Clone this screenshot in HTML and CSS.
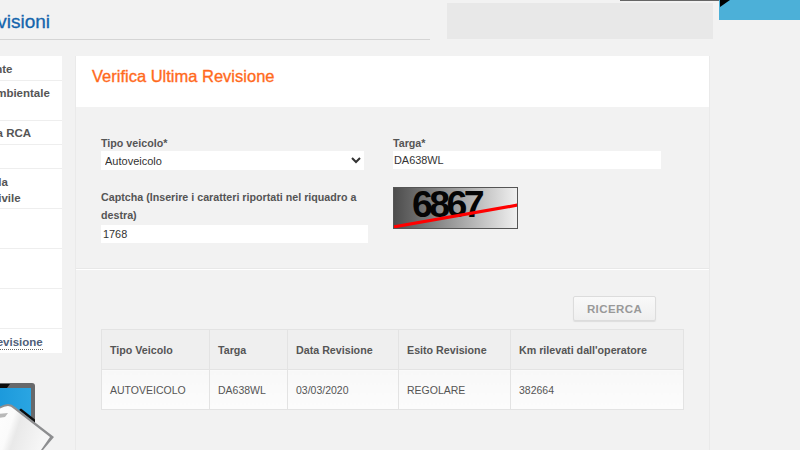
FILE: index.html
```html
<!DOCTYPE html>
<html lang="it">
<head>
<meta charset="utf-8">
<title>Verifica Ultima Revisione</title>
<link rel="stylesheet" href="styles.css">
</head>
<body>
<div class="page">
  <header class="top">
    <div class="title-wrap"><h1 class="page-title">Ultime Revisioni</h1></div>
    <div class="banner-slot"></div>
    <div class="corner">
      <div class="tab"></div>
      <div class="corner-blue"></div>
    </div>
  </header>
  <div class="columns">
    <aside class="side">
      <nav class="menu">
        <a class="item i1">Punti Patente</a>
        <a class="item i2">Classe Ambientale</a>
        <a class="item i3">Copertura RCA</a>
        <a class="item i4">&nbsp;</a>
        <a class="item i5">Veicoli della<br>Assicur. Civile</a>
        <a class="item i6">&nbsp;</a>
        <a class="item i6">&nbsp;</a>
        <a class="item i6">&nbsp;</a>
        <a class="item i8"><span class="current">Ultima Revisione</span></a>
      </nav>
      <div class="laptop">
        <svg viewBox="0 0 60 75" width="60" height="75">
          <defs>
            <linearGradient id="paper" x1="0" y1="0" x2="1" y2="0.25">
              <stop offset="0" stop-color="#ffffff"/>
              <stop offset="0.42" stop-color="#fbfbfb"/>
              <stop offset="0.55" stop-color="#e9e9e9"/>
              <stop offset="1" stop-color="#f6f6f6"/>
            </linearGradient>
            <linearGradient id="screen" x1="0" y1="0" x2="1" y2="0">
              <stop offset="0" stop-color="#0f8fd6"/>
              <stop offset="1" stop-color="#2aa5e2"/>
            </linearGradient>
          </defs>
          <rect x="-30" y="8" width="65" height="70" rx="3" fill="#68696b"/>
          <rect x="-30" y="13" width="61" height="60" fill="url(#screen)"/>
          <path d="M-30 9H10L7 13H-30Z" fill="#0c0c0c"/>
          <path d="M19 35L21 33.5L35 44.5L35 48Z" fill="#0c0c0c"/>
          <path d="M-6 36Q2 29 8 29Q12 29 15 32L54 62L43 75H-10Z" fill="#8d8e90"/>
          <path d="M-6 38Q2 31 8 31Q11 31 14 34L50 62L41 75H-10Z" fill="url(#paper)"/>
          <path d="M-3 39L8 38L5 42L-3 43Z" fill="#b9b9b9"/>
        </svg>
      </div>
    </aside>
    <main class="panel">
      <div class="panel-head"><h2 class="panel-title">Verifica Ultima Revisione</h2></div>
      <form class="form">
        <div class="form-col">
          <label class="lbl">Tipo veicolo*</label>
          <select class="field sel"><option>Autoveicolo</option></select>
          <label class="lbl cap">Captcha (Inserire i caratteri riportati nel riquadro a destra)</label>
          <input class="field inp wide" value="1768">
        </div>
        <div class="form-col right">
          <label class="lbl">Targa*</label>
          <input class="field inp targa" value="DA638WL">
          <div class="captcha">
            <span class="code">6867</span>
            <svg class="strike" viewBox="0 0 125 42" width="125" height="42"><path d="M0 40L125 18" stroke="#f00" stroke-width="3.2"/></svg>
          </div>
        </div>
      </form>
      <div class="results">
        <div class="actions"><button class="btn" type="button">RICERCA</button></div>
        <table class="tbl">
          <thead><tr><th class="c1">Tipo Veicolo</th><th class="c2">Targa</th><th class="c3">Data Revisione</th><th class="c4">Esito Revisione</th><th>Km rilevati dall'operatore</th></tr></thead>
          <tbody><tr><td>AUTOVEICOLO</td><td>DA638WL</td><td>03/03/2020</td><td>REGOLARE</td><td>382664</td></tr></tbody>
        </table>
      </div>
    </main>
  </div>
</div>
</body>
</html>
```
FILE: styles.css
```css
html, body { margin: 0; padding: 0; height: 100%; overflow: hidden; background: #f2f2f2; }
body { font-family: "Liberation Sans", Arial, sans-serif; color: #555; }
.page { width: 900px; margin-left: -140px; }
.top { height: 56px; display: flex; position: relative; }
.title-wrap { width: 570px; height: 39px; border-bottom: 1px solid #d5d5d5; flex: none; }
.page-title { margin: 0; padding: 10px 380px 0 0; font-size: 19px; line-height: 24px; font-weight: 400; color: #1565ad; text-align: right; -webkit-text-stroke: 0.3px #1565ad; white-space: nowrap; }
.banner-slot { width: 266px; height: 36px; margin: 3px 0 0 17px; background: #e8e8e8; flex: none; }
.corner { position: absolute; left: 760px; top: 0; width: 200px; height: 20px; }
.tab { position: absolute; left: 0; top: 0; width: 100px; height: 1px; background: #666; }
.corner-blue { position: absolute; left: 99px; top: 0; width: 81px; height: 20px; background: #4cb0d8; }
.corner-blue::before { content: ""; position: absolute; left: 1px; top: 0; border-top: 7px solid #000; border-right: 10px solid transparent; }
.columns { display: flex; align-items: flex-start; }
.side { width: 202px; flex: none; margin-right: 13px; }
.menu { background: #fff; display: flex; flex-direction: column; }
.item { display: block; border-bottom: 1px solid #eee; box-sizing: border-box; font-size: 11.5px; line-height: 16px; font-weight: 700; color: #555; white-space: nowrap; overflow: hidden; padding: 4px 0 0 88px; }
.i1 { height: 25px; padding: 5px 0 0 79px; }
.i2 { height: 40px; }
.i3 { height: 24px; }
.i4 { height: 24px; }
.i5 { height: 40px; padding: 5px 0 0 82px; }
.i6 { height: 40px; }
.i8 { height: 24px; padding: 5px 0 0 90px; border-bottom: 0; color: #50607a; }
.current { border-bottom: 1px dotted #666; display: inline-block; line-height: 14px; }
.laptop { height: 75px; margin-top: 22px; padding-left: 140px; display: flex; }
.laptop svg { overflow: visible; flex: none; }
.panel { width: 635px; flex: none; height: 400px; border-right: 1px solid #eaeaea; border-left: 1px solid #eaeaea; box-sizing: border-box; }
.panel-head { height: 51px; background: #fff; padding: 10px 16px 0; box-sizing: border-box; }
.panel-title { margin: 0; font-size: 16.5px; line-height: 20px; font-weight: 400; color: #ff6a1c; -webkit-text-stroke: 0.35px #ff6a1c; }
.form { display: flex; height: 162px; padding: 28px 0 0 25px; box-sizing: border-box; border-bottom: 1px solid #e8e8e8; box-shadow: 0 1px 0 #fff; }
.form-col { width: 268px; flex: none; }
.right { margin-left: 24px; }
.lbl { display: block; font-size: 10.7px; line-height: 16px; font-weight: 700; color: #555; }
.cap { margin-top: 18px; margin-bottom: 1px; line-height: 18px; }
.field { display: block; border: 0; background: #fff; font-family: "Liberation Sans", Arial, sans-serif; font-size: 10.9px; color: #333; outline: 0; padding: 0; box-sizing: border-box; border-radius: 0; }
.sel { width: 263px; height: 19px; font-size: 11px; }
.inp { height: 18px; padding-left: 1px; }
.wide { width: 267px; padding-left: 2px; }
.targa { width: 268px; }
.captcha { position: relative; width: 125px; height: 42px; margin-top: 18px; border: 1px solid #555; box-sizing: border-box; background: linear-gradient(90deg, #4d4d4d, #f0f0f0); overflow: hidden; }
.code { position: absolute; left: 18px; top: -5px; font-size: 37.5px; line-height: 42px; font-weight: 700; color: #050505; letter-spacing: -3.6px; }
.strike { position: absolute; left: -1px; top: -1px; }
.results { padding: 27px 25px 0; }
.actions { display: flex; justify-content: flex-end; padding-right: 28px; }
.btn { width: 83px; height: 25px; border: 1px solid #dcdcdc; border-radius: 2px; background: linear-gradient(#f9f9f9, #efefef); font-family: "Liberation Sans", Arial, sans-serif; font-size: 11.5px; font-weight: 700; letter-spacing: 0.4px; color: #999; padding: 0; box-shadow: 0 1px 1px #ddd; }
.tbl { width: 583px; margin-top: 8px; border-collapse: collapse; table-layout: fixed; font-size: 10.7px; }
.tbl th, .tbl td { border: 1px solid #e3e3e3; height: 40px; padding: 0 8px; text-align: left; box-sizing: border-box; }
.tbl th { background: #efefef; font-weight: 700; color: #555; }
.tbl td { background: linear-gradient(#f8f8f8, #fcfcfc); color: #555; font-size: 10.5px; }
.c1 { width: 108px; }
.c2 { width: 78px; }
.c3 { width: 111px; }
.c4 { width: 112px; }
```
